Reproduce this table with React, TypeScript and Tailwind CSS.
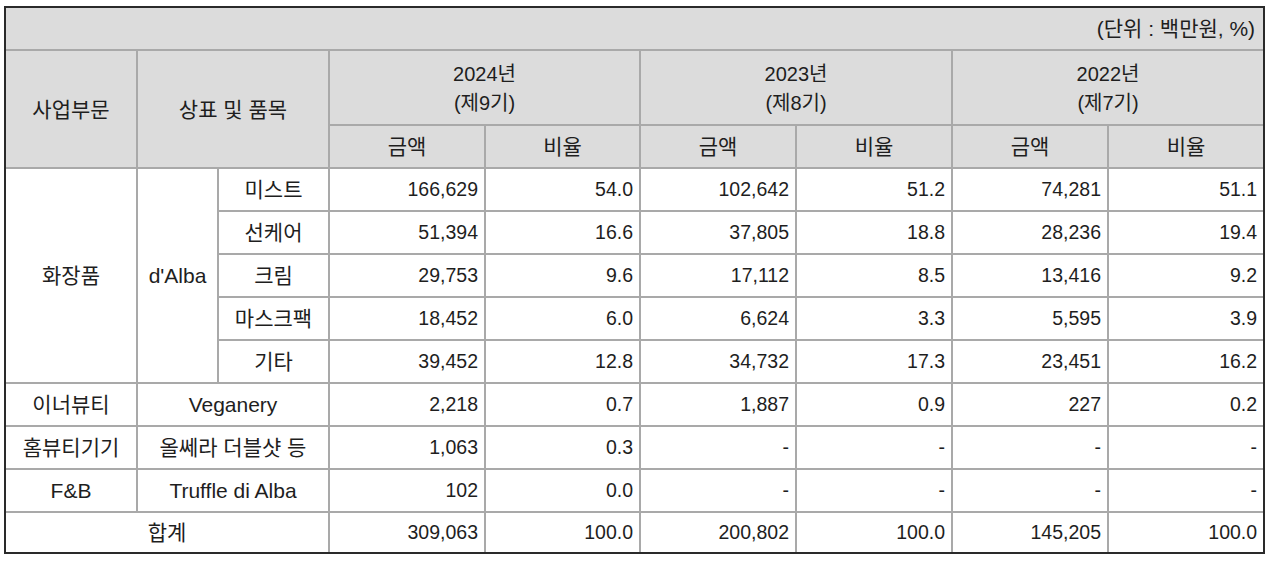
import { type FC } from 'react'

type Row = {
  item: string
  values: string[]
}

const cosmetics: Row[] = [
  { item: '미스트', values: ['166,629', '54.0', '102,642', '51.2', '74,281', '51.1'] },
  { item: '선케어', values: ['51,394', '16.6', '37,805', '18.8', '28,236', '19.4'] },
  { item: '크림', values: ['29,753', '9.6', '17,112', '8.5', '13,416', '9.2'] },
  { item: '마스크팩', values: ['18,452', '6.0', '6,624', '3.3', '5,595', '3.9'] },
  { item: '기타', values: ['39,452', '12.8', '34,732', '17.3', '23,451', '16.2'] },
]

const others: { segment: string; brand: string; values: string[] }[] = [
  { segment: '이너뷰티', brand: 'Veganery', values: ['2,218', '0.7', '1,887', '0.9', '227', '0.2'] },
  { segment: '홈뷰티기기', brand: '올쎄라 더블샷 등', values: ['1,063', '0.3', '-', '-', '-', '-'] },
  { segment: 'F&B', brand: 'Truffle di Alba', values: ['102', '0.0', '-', '-', '-', '-'] },
]

const years = [
  { year: '2024년', term: '(제9기)' },
  { year: '2023년', term: '(제8기)' },
  { year: '2022년', term: '(제7기)' },
]

const cell = 'border-2 border-[#a9a9a9]'
const head = `${cell} bg-[#dcdcdc] text-center font-normal`
const label = `${cell} text-center text-[21px]`
const num = `${cell} pr-[6px] text-right text-[19.5px]`

const Values: FC<{ values: string[] }> = ({ values }) => (
  <>
    {values.map((v, i) => (
      <td key={i} className={num}>
        {v}
      </td>
    ))}
  </>
)

export default function App() {
  return (
    <div className="bg-white pl-[4px] pt-[6px]">
      <table
        className="table-fixed border-collapse border-2 border-[#2a2a2a] text-[20px] leading-none text-[#1e1e1e] outline-2 -outline-offset-2 outline-[#2a2a2a]"
        style={{ fontFamily: "'Liberation Sans', 'Noto Sans CJK KR', sans-serif", width: 1259 }}
      >
        <colgroup>
          <col className="w-[132px]" />
          <col className="w-[81px]" />
          <col className="w-[111px]" />
          <col className="w-[156px]" />
          <col className="w-[155px]" />
          <col className="w-[156px]" />
          <col className="w-[156px]" />
          <col className="w-[156px]" />
          <col className="w-[156px]" />
        </colgroup>
        <thead>
          <tr className="h-[43px]">
            <th colSpan={9} className={`${cell} bg-[#dcdcdc] pr-[8px] text-right text-[21px] font-normal`}>
              (단위 : 백만원, %)
            </th>
          </tr>
          <tr className="h-[75px]">
            <th rowSpan={2} className={`${head} text-[21px]`}>
              사업부문
            </th>
            <th rowSpan={2} colSpan={2} className={`${head} text-[21px]`}>
              상표 및 품목
            </th>
            {years.map((y) => (
              <th key={y.year} colSpan={2} className={`${head} pt-[2px] leading-[29px]`}>
                <div>{y.year}</div>
                <div>{y.term}</div>
              </th>
            ))}
          </tr>
          <tr className="h-[43px]">
            {years.flatMap((y) => [
              <th key={`${y.year}-a`} className={`${head} text-[21px]`}>
                금액
              </th>,
              <th key={`${y.year}-b`} className={`${head} text-[21px]`}>
                비율
              </th>,
            ])}
          </tr>
        </thead>
        <tbody>
          {cosmetics.map((r, i) => (
            <tr key={r.item} className="h-[43px]">
              {i === 0 && (
                <>
                  <td rowSpan={5} className={label}>
                    화장품
                  </td>
                  <td rowSpan={5} className={label}>
                    d'Alba
                  </td>
                </>
              )}
              <td className={label}>{r.item}</td>
              <Values values={r.values} />
            </tr>
          ))}
          {others.map((r) => (
            <tr key={r.segment} className="h-[43px]">
              <td className={label}>{r.segment}</td>
              <td colSpan={2} className={label}>
                {r.brand}
              </td>
              <Values values={r.values} />
            </tr>
          ))}
          <tr className="h-[41px]">
            <td colSpan={3} className={label}>
              합계
            </td>
            <Values values={['309,063', '100.0', '200,802', '100.0', '145,205', '100.0']} />
          </tr>
        </tbody>
      </table>
    </div>
  )
}
